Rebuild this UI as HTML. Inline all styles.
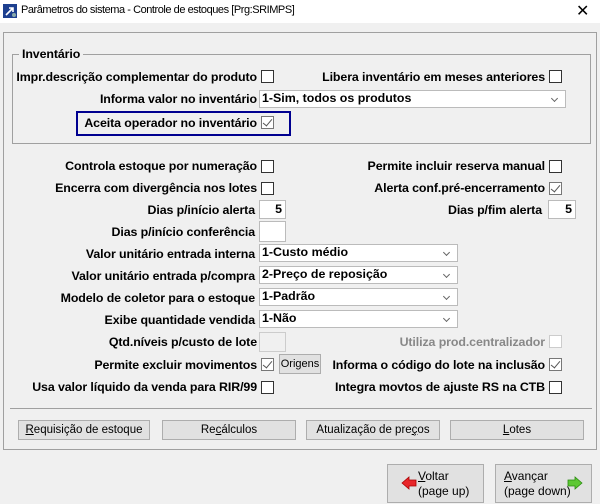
<!DOCTYPE html>
<html><head><meta charset="utf-8"><style>
*{box-sizing:border-box;margin:0;padding:0}
body{width:600px;height:504px;background:#f0f0f0;position:relative;overflow:hidden;font-family:"Liberation Sans",sans-serif;font-size:11.5px;color:#000}
.a{position:absolute}
.l{position:absolute;font-weight:bold;white-space:nowrap;line-height:14px;font-size:12.4px;letter-spacing:-0.1px}
.cb{position:absolute;width:13px;height:13px;border:1px solid #333;background:#fff}
.ck::after{content:"";position:absolute;left:3px;top:0px;width:4px;height:8px;border:solid #555;border-width:0 1px 1px 0;transform:rotate(40deg)}
.in{position:absolute;background:#fff;border:1px solid #bbb;font-weight:bold;text-align:right;padding-right:3px;line-height:16px;font-size:12.4px}
.sel{position:absolute;background:#fff;border:1px solid #bbb;font-weight:bold;padding-left:2px;line-height:15px;height:18px;font-size:12.4px}
.sel::after{content:"";position:absolute;right:8px;top:5px;width:4px;height:4px;border:solid #666;border-width:0 1px 1px 0;transform:rotate(45deg)}
.btn{position:absolute;background:#e1e1e1;border:1px solid #adadad;text-align:center;font-size:11.5px;line-height:18px}
</style></head><body>
<div class="a" style="left:0;top:0;width:600px;height:23px;background:#fff"></div>
<svg class="a" style="left:3px;top:4px" width="14" height="14"><rect width="14" height="14" fill="#1d3f8f"/><path d="M3 11 L10 4 M6 4 H10 V8" stroke="#fff" stroke-width="1.6" fill="none"/><circle cx="11" cy="11" r="2" fill="#8aa"/></svg>
<div class="a" style="left:21px;top:4px;font-size:11px;letter-spacing:-0.45px">Parâmetros do sistema - Controle de estoques [Prg:SRIMPS]</div>
<div class="a" style="left:576px;top:1px;font-size:16px;font-weight:normal">✕</div>
<div class="a" style="left:3px;top:32px;width:594px;height:418px;border:1px solid #a0a0a0"></div>
<div class="a" style="left:12px;top:54px;width:579px;height:90px;border:1px solid #a0a0a0"></div>
<div class="l" style="left:19px;top:47px;background:#f0f0f0;padding:0 3px">Inventário</div>

<div class="l" style="right:343px;top:70px">Impr.descrição complementar do produto</div><div class="cb" style="left:261px;top:70px"></div>
<div class="l" style="right:55px;top:70px">Libera inventário em meses anteriores</div><div class="cb" style="left:549px;top:70px"></div>
<div class="l" style="right:343px;top:92px">Informa valor no inventário</div><div class="sel" style="left:259px;top:90px;width:307px">1-Sim, todos os produtos</div>
<div class="a" style="left:76px;top:111px;width:215px;height:25px;border:2px solid #000090"></div>
<div class="l" style="right:343px;top:116px">Aceita operador no inventário</div><div class="cb ck" style="left:261px;top:116px;border-color:#777"></div>

<div class="l" style="right:343px;top:159px">Controla estoque por numeração</div><div class="cb" style="left:261px;top:160px"></div>
<div class="l" style="right:55px;top:159px">Permite incluir reserva manual</div><div class="cb" style="left:549px;top:160px"></div>
<div class="l" style="right:343px;top:181px">Encerra com divergência nos lotes</div><div class="cb" style="left:261px;top:182px"></div>
<div class="l" style="right:55px;top:181px">Alerta conf.pré-encerramento</div><div class="cb ck" style="left:549px;top:182px;border-color:#777"></div>
<div class="l" style="right:345px;top:203px">Dias p/início alerta</div><div class="in" style="left:259px;top:200px;width:27px;height:19px">5</div>
<div class="l" style="right:58px;top:203px">Dias p/fim alerta</div><div class="in" style="left:548px;top:200px;width:28px;height:19px">5</div>
<div class="l" style="right:345px;top:225px">Dias p/início conferência</div><div class="in" style="left:259px;top:221px;width:27px;height:21px"></div>
<div class="l" style="right:345px;top:247px">Valor unitário entrada interna</div><div class="sel" style="left:259px;top:244px;width:199px">1-Custo médio</div>
<div class="l" style="right:345px;top:269px">Valor unitário entrada p/compra</div><div class="sel" style="left:259px;top:266px;width:199px">2-Preço de reposição</div>
<div class="l" style="right:345px;top:291px">Modelo de coletor para o estoque</div><div class="sel" style="left:259px;top:288px;width:199px">1-Padrão</div>
<div class="l" style="right:345px;top:313px">Exibe quantidade vendida</div><div class="sel" style="left:259px;top:310px;width:199px">1-Não</div>
<div class="l" style="right:343px;top:335px">Qtd.níveis p/custo de lote</div><div class="in" style="left:259px;top:332px;width:27px;height:20px;background:#f0f0f0;border-color:#ccc"></div>
<div class="l" style="right:55px;top:335px;color:#888">Utiliza prod.centralizador</div><div class="cb" style="left:549px;top:335px;border-color:#ccc"></div>
<div class="l" style="right:343px;top:358px">Permite excluir movimentos</div><div class="cb ck" style="left:261px;top:358px;border-color:#777"></div>
<div class="btn" style="left:279px;top:354px;width:42px;height:20px;font-size:11px">Origens</div>
<div class="l" style="right:55px;top:358px">Informa o código do lote na inclusão</div><div class="cb ck" style="left:549px;top:358px;border-color:#777"></div>
<div class="l" style="right:343px;top:380px">Usa valor líquido da venda para RIR/99</div><div class="cb" style="left:261px;top:381px"></div>
<div class="l" style="right:55px;top:380px">Integra movtos de ajuste RS na CTB</div><div class="cb" style="left:549px;top:381px"></div>

<div class="a" style="left:10px;top:408px;width:582px;height:1px;background:#a0a0a0"></div>
<div class="btn" style="left:18px;top:420px;width:132px;height:20px"><u>R</u>equisição de estoque</div>
<div class="btn" style="left:162px;top:420px;width:134px;height:20px">Re<u>c</u>álculos</div>
<div class="btn" style="left:306px;top:420px;width:134px;height:20px">Atualização de pre<u>ç</u>os</div>
<div class="btn" style="left:450px;top:420px;width:134px;height:20px"><u>L</u>otes</div>

<div class="btn" style="left:387px;top:464px;width:97px;height:39px;text-align:left;padding:4px 0 0 30px;line-height:15px;font-size:12px"><u>V</u>oltar<br>(page up)</div>
<svg class="a" style="left:401px;top:476px" width="16" height="14"><path d="M1 7 L8 1 V4 H15 V10 H8 V13 Z" fill="#e8262a" stroke="#a00" stroke-width=".8"/></svg>
<div class="btn" style="left:495px;top:464px;width:97px;height:39px;text-align:left;padding:4px 0 0 8px;line-height:15px;font-size:12px"><u>A</u>vançar<br>(page down)</div>
<svg class="a" style="left:567px;top:476px" width="16" height="14"><path d="M15 7 L8 1 V4 H1 V10 H8 V13 Z" fill="#5cc832" stroke="#2a8a10" stroke-width=".8"/></svg>
</body></html>
